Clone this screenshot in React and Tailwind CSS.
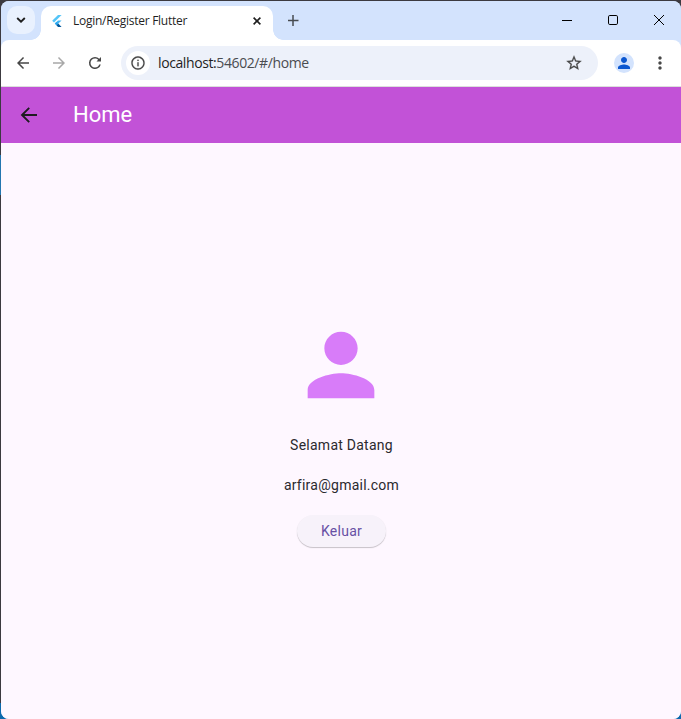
import React from "react";

function Icon({ d, size, className = "" }) {
  return (
    <svg viewBox="0 0 24 24" width={size} height={size} className={`shrink-0 ${className}`} fill="currentColor">
      <path d={d} />
    </svg>
  );
}

const PERSON =
  "M12 12c2.21 0 4-1.79 4-4s-1.79-4-4-4-4 1.79-4 4 1.79 4 4 4zm0 2c-2.67 0-8 1.34-8 4v2h16v-2c0-2.66-5.33-4-8-4z";
const BACK = "M20 11H7.83l5.59-5.59L12 4l-8 8 8 8 1.41-1.41L7.83 13H20v-2z";
const FORWARD = "M12 4l-1.41 1.41L16.17 11H4v2h12.17l-5.58 5.59L12 20l8-8z";
const REFRESH =
  "M17.65 6.35A7.958 7.958 0 0 0 12 4a8 8 0 1 0 7.73 10h-2.08A5.99 5.99 0 0 1 12 18c-3.31 0-6-2.69-6-6s2.69-6 6-6c1.66 0 3.14.69 4.22 1.78L14 10h6V4z";
const INFO =
  "M11 7h2v2h-2zm0 4h2v6h-2zm1-9C6.48 2 2 6.48 2 12s4.48 10 10 10 10-4.48 10-10S17.52 2 12 2zm0 18c-4.41 0-8-3.59-8-8s3.59-8 8-8 8 3.59 8 8-3.59 8-8 8z";
const STAR =
  "M22 9.24l-7.19-.62L12 2 9.19 8.63 2 9.24l5.46 4.73L5.82 21 12 17.27 18.18 21l-1.63-7.03L22 9.24zM12 15.4l-3.76 2.27 1-4.28-3.32-2.88 4.38-.38L12 6.1l1.71 4.04 4.38.38-3.32 2.88 1 4.28L12 15.4z";
const DOTS =
  "M12 8c1.1 0 2-.9 2-2s-.9-2-2-2-2 .9-2 2 .9 2 2 2zm0 2c-1.1 0-2 .9-2 2s.9 2 2 2 2-.9 2-2-.9-2-2-2zm0 6c-1.1 0-2 .9-2 2s.9 2 2 2 2-.9 2-2-.9-2-2-2z";

function FlutterLogo() {
  return (
    <svg viewBox="0 0 10 12" width="10" height="12" className="shrink-0">
      <path d="M6 0h3.6L2 7.4.2 5.7z" fill="#54c5f8" />
      <path d="M6 5.4h3.6L6.3 8.6 4.5 10.3 2.8 8.6z" fill="#40b6f5" />
      <path d="M4.5 6.9l1.8 1.7-1.8 1.8-1.7-1.8z" fill="#29a5ee" />
      <path d="M4.5 10.3l1.8-1.7L9.6 12H6z" fill="#01579b" />
    </svg>
  );
}

function TabStrip() {
  return (
    <div className="flex h-[39px] items-start bg-[#d3e3fd]">
      <div className="mt-[5px] ml-[6px] flex h-7 w-7 items-center justify-center rounded-[10px] bg-[#e9f1fe] text-[#1f1f1f]">
        <svg width="10" height="6" viewBox="0 0 10 6" fill="none" stroke="currentColor" strokeWidth="1.9">
          <path d="M1.2 1L5 4.6 8.8 1" />
        </svg>
      </div>
      <div className="mt-[29px] -ml-1 h-[10px] w-[10px] bg-[radial-gradient(circle_at_0_0,transparent_9.5px,white_10px)]" />
      <div className="mt-[5px] flex h-[34px] w-[232px] items-center rounded-t-[10px] bg-white pb-[5px] pl-[11px]">
        <FlutterLogo />
        <span className="ml-[11px] w-[168px] whitespace-nowrap font-['Open_Sans',sans-serif] text-[12px] tracking-[-0.27px] text-[#1f1f1f]">
          Login/Register Flutter
        </span>
        <svg width="8" height="8" viewBox="0 0 8 8" className="ml-3" stroke="#1f1f1f" strokeWidth="1.6">
          <path d="M.6.6l6.8 6.8M7.4.6L.6 7.4" />
        </svg>
      </div>
      <div className="mt-[29px] h-[10px] w-[10px] bg-[radial-gradient(circle_at_100%_0,transparent_9.5px,white_10px)]" />
      <div className="flex h-[38px] grow items-center">
        <svg width="11" height="11" viewBox="0 0 11 11" className="ml-[5px]" stroke="#474b50" strokeWidth="1.5">
          <path d="M5 0v11M0 5.5h10.5" />
        </svg>
        <div className="ml-auto mr-[17px] flex items-center gap-9">
          <svg width="10" height="10" viewBox="0 0 10 10" shapeRendering="crispEdges">
            <rect y="5" width="10" height="1" />
          </svg>
          <svg width="10" height="10" viewBox="0 0 10 10" fill="none" stroke="black">
            <rect x=".5" y=".5" width="9" height="9" rx="1.3" />
          </svg>
          <svg width="10" height="10" viewBox="0 0 10 10" stroke="black">
            <path d="M0 0l10 10M10 0L0 10" />
          </svg>
        </div>
      </div>
    </div>
  );
}

function Toolbar() {
  return (
    <div className="flex h-[47px] items-center rounded-t-lg border-b border-[#dcdfdc] bg-white text-[#474747]">
      <Icon d={BACK} size={18} className="ml-[13px]" />
      <Icon d={FORWARD} size={18} className="ml-[18px] text-[#a8a8a8]" />
      <Icon d={REFRESH} size={18} className="ml-[18px]" />
      <div className="ml-[17px] flex h-[34px] w-[477px] items-center rounded-full bg-[#edf1fa] pl-[5px] pr-[15px]">
        <div className="flex h-6 w-6 items-center justify-center rounded-full bg-white">
          <Icon d={INFO} size={16} className="stroke-current stroke-[0.2]" />
        </div>
        <span className="ml-2 pb-px whitespace-nowrap font-['Open_Sans',sans-serif] text-[14px] tracking-[-0.4px] text-[#4a4c50]">
          <span className="text-[#1f1f1f]">localhost:</span>54602/#/home
        </span>
        <Icon d={STAR} size={18} className="ml-auto stroke-current stroke-[0.3]" />
      </div>
      <div className="ml-4 flex h-5 w-5 items-center justify-center rounded-full bg-[#d3e3fd] text-[#0b57d0]">
        <Icon d={PERSON} size={18} />
      </div>
      <Icon d={DOTS} size={20} className="ml-4" />
    </div>
  );
}

export default function App() {
  return (
    <div className="flex h-[719px] w-[681px] overflow-hidden bg-[linear-gradient(#3c3a40_0_155px,#2376b0_155px_195px,#3c3a40_195px_703px,#0c69ad_703px)] pt-px pl-px">
      <div className="flex grow flex-col overflow-hidden rounded-lg bg-[#d3e3fd]">
        <TabStrip />
        <Toolbar />
        <header className="flex h-14 shrink-0 items-center bg-[#c252d7]">
          <svg width="24" height="24" viewBox="0 0 24 24" className="ml-4 text-[#1d1b20]" fill="none" stroke="currentColor" strokeWidth="1.9">
            <path d="M20 12H5.2M12.2 4.8L5 12l7.2 7.2" />
          </svg>
          <h1 className="ml-8 pb-px font-[Roboto,sans-serif] text-[22px] text-white">Home</h1>
        </header>
        <main className="flex grow flex-col items-center bg-[#fef7ff] pt-[172px] pl-px font-[Roboto,sans-serif] text-[14px] leading-5 tracking-[0.25px] text-[#2b292e]">
          <Icon d={PERSON} size={100} className="mr-px text-[#d87cf9]" />
          <p className="mt-5">Selamat Datang</p>
          <p className="mt-5">arfira@gmail.com</p>
          <button className="mt-5 h-8 w-[89px] rounded-full bg-[#f7f2fa] tracking-[0.25px] text-[#6750a4] shadow-[0_1px_1px_rgba(0,0,0,0.22)]">
            Keluar
          </button>
        </main>
      </div>
    </div>
  );
}
